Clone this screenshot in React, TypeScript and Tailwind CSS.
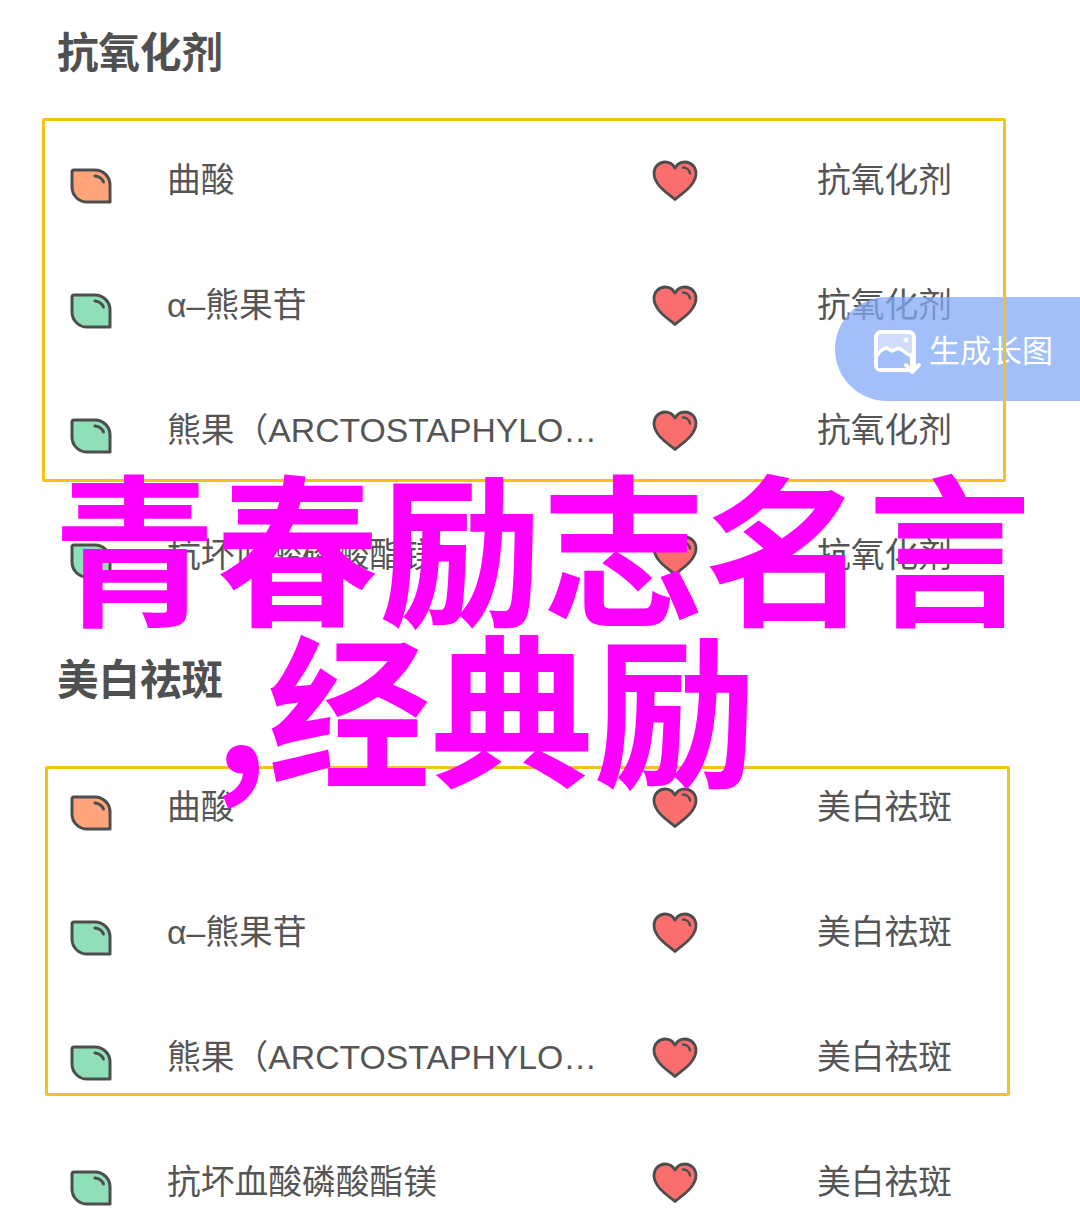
import React from 'react';

const FONT = "font-['Liberation_Sans','Noto_Sans_CJK_SC',sans-serif]";

const Leaf: React.FC<{ fill: string }> = ({ fill }) => (
  <svg width="42" height="36" viewBox="0 0 42 36" fill="none">
    <path
      d="M4 2 H25 A15 15 0 0 1 40 17 V34 H18 A15 15 0 0 1 2 19 V4 A2 2 0 0 1 4 2 Z"
      fill={fill}
      stroke="#4d4d4d"
      strokeWidth="3"
      strokeLinejoin="round"
    />
    <path d="M25 8 C29 8.5 32 10.5 33.5 14" stroke="#4d4d4d" strokeWidth="3" strokeLinecap="round" />
  </svg>
);

const Heart: React.FC = () => (
  <svg width="46" height="42" viewBox="0 0 46 42" fill="none">
    <path
      d="M23 39.5 C19 35.5 2 26 2 13.5 C2 6.5 7.5 2 13 2 C17.5 2 21 4.2 23 8 C25 4.2 28.5 2 33 2 C38.5 2 44 6.5 44 13.5 C44 26 27 35.5 23 39.5 Z"
      fill="#fa6e6e"
      stroke="#4d4d4d"
      strokeWidth="2.8"
      strokeLinejoin="round"
    />
    <path d="M31 7.5 C34.5 7.5 37.5 10 38 13.5" stroke="#4d4d4d" strokeWidth="2.4" strokeLinecap="round" />
  </svg>
);

const Row: React.FC<{ name: string; tag: string; leaf: string }> = ({ name, tag, leaf }) => (
  <div className="flex h-[125px] items-center">
    <div className="ml-[70px] mt-[11px] w-[97px] shrink-0">
      <Leaf fill={leaf} />
    </div>
    <div className="w-[485px] shrink-0 text-[33.75px] text-[#555555]">{name}</div>
    <div className="w-[165px] shrink-0">
      <Heart />
    </div>
    <div className="text-[33.75px] text-[#555555]">{tag}</div>
  </div>
);

const Section: React.FC<{ title: string; leaves: string[] }> = ({ title, leaves }) => {
  const names = ['曲酸', 'α–熊果苷', '熊果（ARCTOSTAPHYLO…', '抗坏血酸磷酸酯镁'];
  return (
    <section>
      <h2 className="h-[118px] pl-[57px] pt-[25px] text-[41.5px] leading-[58px] font-bold text-[#505050]">{title}</h2>
      {names.map((name, i) => (
        <Row key={name} name={name} tag={title} leaf={leaves[i]} />
      ))}
    </section>
  );
};

export default function App() {
  const leaves = ['#ffa47a', '#8fe0b8', '#8fe0b8', '#8fe0b8'];
  return (
    <div className={`relative h-[1226px] w-[1080px] overflow-hidden bg-white ${FONT}`}>
      <Section title="抗氧化剂" leaves={leaves} />
      <div className="mt-[9px]">
        <Section title="美白祛斑" leaves={leaves} />
      </div>

      {/* generate-long-image pill */}
      <div className="absolute left-[835px] top-[297px] flex h-[104px] w-[245px] items-center gap-[7px] rounded-l-[52px] bg-[#84a9f8]/75 pl-[38px] pt-[6px] text-[31px] text-white">
        <svg width="49" height="46" viewBox="0 0 49 46" fill="none">
          <rect x="3" y="3" width="38" height="38" rx="5" fill="#cfdcfc" stroke="#ffffff" strokeWidth="4" />
          <circle cx="33" cy="11" r="2.5" fill="#ffffff" />
          <path d="M5 26 C9 20 13 17 17 21 C20 24 23 18 27 20 C31 22 32 25 38 27" stroke="#ffffff" strokeWidth="4" strokeLinecap="round" />
          <path d="M5 28 C9 22 13 19 17 23 C20 26 23 20 27 22 C31 24 33 27 39 29 V39 H5 Z" fill="#a3bffa" />
          <path d="M39 26 V42 M33 36 L39 43 L46 36" stroke="#ffffff" strokeWidth="4" strokeLinecap="round" strokeLinejoin="round" />
        </svg>
        <span>生成长图</span>
      </div>

      {/* highlight frames */}
      <div className="absolute left-[42px] top-[118px] h-[364px] w-[964px] rounded-[2px] border-[3px] border-[#f6c218]" />
      <div className="absolute left-[45px] top-[766px] h-[330px] w-[965px] rounded-[2px] border-[3px] border-[#f6c218]" />

      {/* headline over the page */}
      <div className="absolute left-0 top-[462px] w-full text-center font-['Noto_Sans_CJK_SC',sans-serif] text-[163px] leading-[161px] font-bold whitespace-nowrap text-[#ff00ff]">
        <div className="pl-[4px]">青春励志名言</div>
        <div className="pr-[109px]">,经典励</div>
      </div>
    </div>
  );
}
